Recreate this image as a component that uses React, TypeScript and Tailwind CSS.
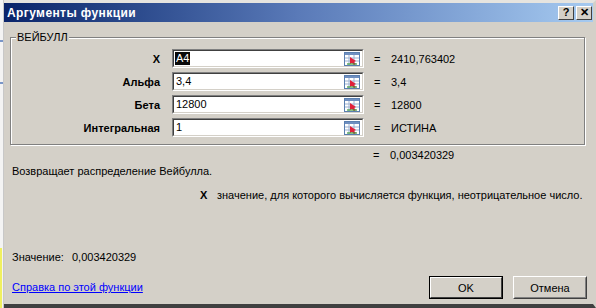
import React from "react";

const RefIcon = () => (
  <svg width="16" height="14" viewBox="0 0 16 14" className="shrink-0">
    <rect x="0.5" y="0.5" width="15" height="13" fill="#ffffff" stroke="#5a7fb0" />
    <rect x="1" y="1" width="14" height="2" fill="#6f8fc0" />
    <line x1="1" y1="6" x2="15" y2="6" stroke="#9bb0d0" />
    <line x1="1" y1="9" x2="15" y2="9" stroke="#9bb0d0" />
    <line x1="5" y1="3" x2="5" y2="13" stroke="#9bb0d0" />
    <line x1="10" y1="3" x2="10" y2="13" stroke="#9bb0d0" />
    <path d="M6 5 L12 9 L10 10 L12 12 L10 13 L8 11 L6 12 Z" fill="#e0203a" />
    <rect x="3" y="11" width="10" height="2" fill="#3a9a3a" opacity="0.6" />
  </svg>
);

const Row = ({ label, value, result, selected }: { label: string; value: string; result: string; selected?: boolean }) => (
  <div className="flex items-center h-[23px]">
    <div className="w-[161px] text-right font-bold pr-[12px]">{label}</div>
    <div className="w-[192px] h-[19px] border border-t-[#808080] border-l-[#808080] border-r-white border-b-white">
      <div className="h-full border border-t-[#404040] border-l-[#404040] border-r-[#d4d0c8] border-b-[#d4d0c8] bg-white flex items-center justify-between pl-[1px] pr-[2px]">
        <span className={selected ? "bg-[#0a0a0a] text-white px-[1px] leading-[13px]" : "px-[1px] leading-[13px]"}>{value}</span>
        <RefIcon />
      </div>
    </div>
    <div className="pl-[10px] w-[27px]">=</div>
    <div>{result}</div>
  </div>
);

export default function App() {
  return (
    <div
      className="w-[596px] h-[308px] overflow-hidden bg-[#d4d0c8] flex text-[11px] leading-[14px] text-black"
      style={{ fontFamily: '"Liberation Sans", Arial, sans-serif' }}
    >
      <div className="w-[4px] h-full bg-[#f4f4f4] border-r border-[#c8c8c8] flex flex-col">
        <div className="h-[40px]" />
        <div className="h-[2px] bg-[#7a96c8] w-[3px]" />
        <div className="h-[40px]" />
        <div className="h-[2px] bg-[#7a96c8] w-[3px]" />
        <div className="flex-1" />
        <div className="h-[60px] bg-[#f0f060] w-[2px]" />
      </div>
      <div className="flex-1 flex flex-col border-t-[3px] border-t-[#e6e4df] border-r-[3px] border-r-[#d4d0c8] border-b-[4px] border-b-[#404040]">
        <div className="h-[19px] flex items-center justify-between pl-[3px] pr-[1px] bg-gradient-to-r from-[#0a246a] via-[#5a7ab8] to-[#a6caf0]">
          <span className="text-white font-bold text-[12px] tracking-[0.4px]">Аргументы функции</span>
          <div className="flex gap-[2px]">
            <div className="w-[16px] h-[14px] bg-[#d4d0c8] border border-t-white border-l-white border-r-[#404040] border-b-[#404040] flex items-center justify-center font-bold text-[11px] leading-none">?</div>
            <div className="w-[16px] h-[14px] bg-[#d4d0c8] border border-t-white border-l-white border-r-[#404040] border-b-[#404040] flex items-center justify-center font-bold text-[11px] leading-none">✕</div>
          </div>
        </div>
        <div className="flex-1 flex flex-col px-[6px] pt-[15px]">
          <div className="relative border border-[#808080] shadow-[inset_1px_1px_0_#ffffff,1px_1px_0_#ffffff] h-[108px] mr-[2px] pt-[9px]">
            <span className="absolute left-[5px] -top-[8px] bg-[#d4d0c8] px-[1px]">ВЕЙБУЛЛ</span>
            <Row label="X" value="A4" result="2410,763402" selected />
            <Row label="Альфа" value="3,4" result="3,4" />
            <Row label="Бета" value="12800" result="12800" />
            <Row label="Интегральная" value="1" result="ИСТИНА" />
          </div>
          <div className="flex h-[19px] items-center">
            <div className="w-[353px]" />
            <div className="pl-[10px] w-[27px]">=</div>
            <div>0,003420329</div>
          </div>
          <div className="pl-[2px] h-[14px]">Возвращает распределение Вейбулла.</div>
          <div className="flex mt-[10px] pl-[190px] h-[14px]">
            <span className="font-bold w-[17px]">X</span>
            <span>значение, для которого вычисляется функция, неотрицательное число.</span>
          </div>
          <div className="mt-[48px] pl-[2px] flex h-[14px]">
            <span className="w-[60px]">Значение:</span>
            <span>0,003420329</span>
          </div>
          <div className="flex items-start justify-between mt-[12px]">
            <span className="pl-[2px] mt-[4px] text-[#0000ff] underline">Справка по этой функции</span>
            <div className="flex gap-[10px]">
              <div className="w-[74px] h-[23px] border border-black">
                <div className="h-full border border-t-white border-l-white border-r-[#404040] border-b-[#404040] flex items-center justify-center">OK</div>
              </div>
              <div className="w-[74px] h-[23px] border border-t-white border-l-white border-r-[#404040] border-b-[#404040]">
                <div className="h-full border border-t-[#d4d0c8] border-l-[#d4d0c8] border-r-[#808080] border-b-[#808080] flex items-center justify-center">Отмена</div>
              </div>
            </div>
          </div>
        </div>
      </div>
    </div>
  );
}
